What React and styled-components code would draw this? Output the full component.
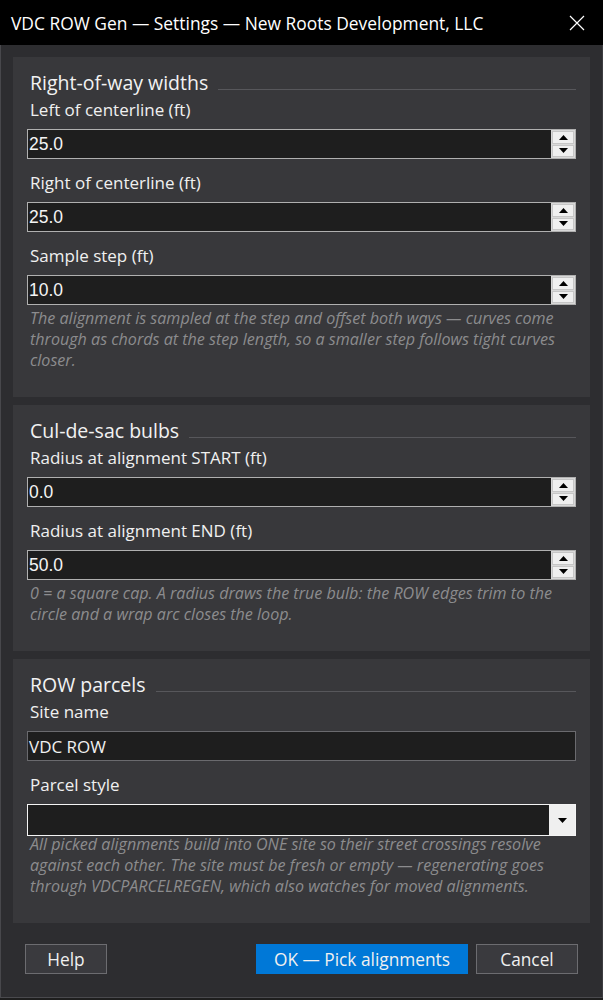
import React from 'react';
import styled, { createGlobalStyle } from 'styled-components';

const Global = createGlobalStyle`
  html, body { margin: 0; padding: 0; background: #1e1e1e; }
  body {
    width: 603px; height: 1000px; overflow: hidden;
    font-family: "Open Sans", "Noto Sans", sans-serif;
    color: #f0f0f0;
  }
  * { box-sizing: border-box; }
`;

const Frame = styled.div`
  width: 603px;
  display: flex;
  flex-direction: column;
`;

const TitleBar = styled.div`
  height: 45px;
  background: #000;
  display: flex;
  align-items: center;
  justify-content: space-between;
  padding-left: 11px;
`;

const Title = styled.div`
  font-size: 17.4px;
  color: #ffffff;
  white-space: nowrap;
`;

const CloseBtn = styled.div`
  width: 52px;
  height: 45px;
  display: flex;
  align-items: center;
  justify-content: center;
`;

const Body = styled.div`
  height: 953px;
  background: #2d2d30;
  border-left: 1px solid #48484c;
  border-right: 1px solid #3c3c40;
  border-bottom: 1px solid #4a4a4e;
  padding: 12px 12px 0 12px;
  display: flex;
  flex-direction: column;
  gap: 8px;
`;

const Panel = styled.section`
  background: #38383b;
  padding: 12px 14px 26px 14px;
  display: flex;
  flex-direction: column;
`;

const HeaderRow = styled.div`
  display: flex;
  align-items: flex-end;
  height: 27px;
  padding-left: 3px;
`;

const HeaderText = styled.h2`
  margin: 0;
  font-size: 19.5px;
  font-weight: 400;
  line-height: 27px;
  color: #f2f2f2;
  white-space: nowrap;
`;

const HeaderRule = styled.div`
  flex: 1;
  height: 1px;
  background: #57575b;
  margin: 0 0 6px 10px;
`;

const Label = styled.label`
  display: block;
  font-size: 17px;
  line-height: 24px;
  padding-left: 3px;
  margin-top: ${p => (p.$first ? '2px' : '12px')};
  margin-bottom: 7px;
  color: #f0f0f0;
  white-space: nowrap;
`;

const NumBox = styled.div`
  height: 30px;
  background: #1e1e1e;
  border: 1px solid #b0b0b0;
  display: flex;
  align-items: center;
  justify-content: space-between;
`;

const NumValue = styled.span`
  font-family: "Liberation Sans", Arial, sans-serif;
  font-size: 17.5px;
  color: #f4f4f4;
  padding-left: 1px;
`;

const Spinner = styled.div`
  width: 24px;
  height: 28px;
  display: flex;
  flex-direction: column;
  background: #d8d8d8;
  padding: 1px;
  gap: 1px;
`;

const SpinBtn = styled.div`
  flex: 1;
  background: #efefef;
  border: 1px solid #c6c6c6;
  display: flex;
  align-items: center;
  justify-content: center;
`;

const TextBox = styled.div`
  height: 30px;
  background: #1e1e1e;
  border: 1px solid #6a6a6e;
  display: flex;
  align-items: center;
  padding-left: 1px;
  font-size: 17px;
  color: #f0f0f0;
`;

const Combo = styled.div`
  height: 32px;
  background: #1e1e1e;
  border: 1px solid #f4f4f4;
  display: flex;
  justify-content: flex-end;
`;

const DropBtn = styled.div`
  width: 26px;
  background: #efefef;
  display: flex;
  align-items: center;
  justify-content: center;
`;

const Hint = styled.p`
  margin: ${p => (p.$tight ? '-2px' : '3px')} 0 0 0;
  padding-left: 3px;
  font-size: 16.1px;
  font-style: italic;
  line-height: 21px;
  color: #8c8c8e;
`;

const Footer = styled.div`
  display: flex;
  align-items: center;
  padding: 13px 12px 0 12px;
  gap: 8px;
`;

const Button = styled.button`
  height: 30px;
  width: ${p => p.$w}px;
  font-family: "Open Sans", "Noto Sans", sans-serif;
  font-size: 17.3px;
  color: #f0f0f0;
  background: ${p => (p.$primary ? '#0078d7' : '#3a3a3e')};
  border: 1px solid ${p => (p.$primary ? '#0078d7' : '#6c6c70')};
  padding: 0;
  margin-left: ${p => (p.$push ? 'auto' : '0')};
`;

const Tri = ({ up }) => (
  <svg width="9" height="5" viewBox="0 0 9 5">
    <path d={up ? 'M0 5 L4.5 0 L9 5 Z' : 'M0 0 L4.5 5 L9 0 Z'} fill="#000" />
  </svg>
);

const NumberField = ({ label, value, first }) => (
  <>
    <Label $first={first}>{label}</Label>
    <NumBox>
      <NumValue>{value}</NumValue>
      <Spinner>
        <SpinBtn><Tri up /></SpinBtn>
        <SpinBtn><Tri /></SpinBtn>
      </Spinner>
    </NumBox>
  </>
);

const SectionHeader = ({ children }) => (
  <HeaderRow>
    <HeaderText>{children}</HeaderText>
    <HeaderRule />
  </HeaderRow>
);

export default function App() {
  return (
    <>
      <Global />
      <Frame>
        <TitleBar>
          <Title>VDC ROW Gen — Settings — New Roots Development, LLC</Title>
          <CloseBtn>
            <svg width="16" height="16" viewBox="0 0 16 16">
              <path d="M1 1 L15 15 M15 1 L1 15" stroke="#ffffff" strokeWidth="1.2" />
            </svg>
          </CloseBtn>
        </TitleBar>
        <Body>
          <Panel>
            <SectionHeader>Right-of-way widths</SectionHeader>
            <NumberField first label="Left of centerline (ft)" value="25.0" />
            <NumberField label="Right of centerline (ft)" value="25.0" />
            <NumberField label="Sample step (ft)" value="10.0" />
            <Hint>
              The alignment is sampled at the step and offset both ways — curves come
              through as chords at the step length, so a smaller step follows tight curves
              closer.
            </Hint>
          </Panel>
          <Panel>
            <SectionHeader>Cul-de-sac bulbs</SectionHeader>
            <NumberField first label="Radius at alignment START (ft)" value="0.0" />
            <NumberField label="Radius at alignment END (ft)" value="50.0" />
            <Hint>
              0 = a square cap. A radius draws the true bulb: the ROW edges trim to the
              circle and a wrap arc closes the loop.
            </Hint>
          </Panel>
          <Panel>
            <SectionHeader>ROW parcels</SectionHeader>
            <Label $first>Site name</Label>
            <TextBox>VDC ROW</TextBox>
            <Label>Parcel style</Label>
            <Combo>
              <DropBtn><Tri /></DropBtn>
            </Combo>
            <Hint $tight>
              All picked alignments build into ONE site so their street crossings resolve
              against each other. The site must be fresh or empty — regenerating goes
              through VDCPARCELREGEN, which also watches for moved alignments.
            </Hint>
          </Panel>
          <Footer>
            <Button $w={82}>Help</Button>
            <Button $w={212} $primary $push>OK — Pick alignments</Button>
            <Button $w={102}>Cancel</Button>
          </Footer>
        </Body>
      </Frame>
    </>
  );
}
